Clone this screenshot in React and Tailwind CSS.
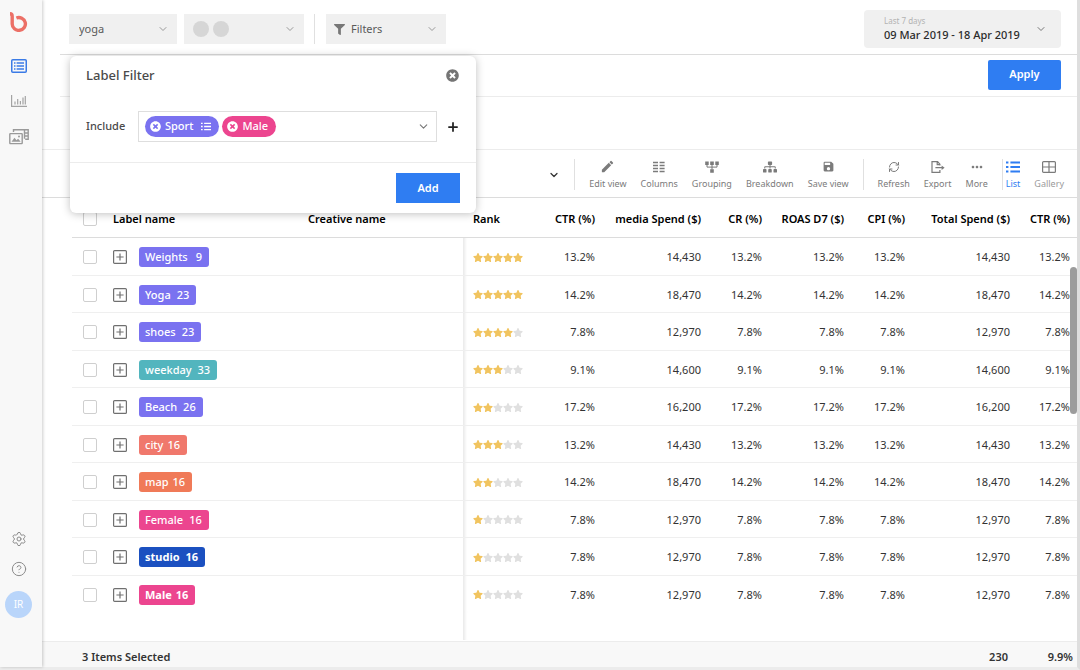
import React, { useState } from 'react';
import { ChevronDown, CircleHelp, Plus, RefreshCw, Settings } from 'lucide-react';
import { FaFilter, FaSitemap, FaStar, FaTimesCircle } from 'react-icons/fa';
import { MdEdit, MdMoreHoriz, MdSave } from 'react-icons/md';

const ROWS = [
  { label: 'Weights', count: 9, color: 'bg-[#7a72f0]', gap: 'gap-2', stars: 5, pct: '13.2%', spend: '14,430' },
  { label: 'Yoga', count: 23, color: 'bg-[#7a72f0]', gap: 'gap-1.5', stars: 5, pct: '14.2%', spend: '18,470' },
  { label: 'shoes', count: 23, color: 'bg-[#7a72f0]', gap: 'gap-1.5', stars: 4, pct: '7.8%', spend: '12,970' },
  { label: 'weekday', count: 33, color: 'bg-[#52b5be]', gap: 'gap-1.5', stars: 3, pct: '9.1%', spend: '14,600' },
  { label: 'Beach', count: 26, color: 'bg-[#7a72f0]', gap: 'gap-1.5', stars: 2, pct: '17.2%', spend: '16,200' },
  { label: 'city', count: 16, color: 'bg-[#f0786c]', gap: 'gap-1', stars: 3, pct: '13.2%', spend: '14,430' },
  { label: 'map', count: 16, color: 'bg-[#f07a58]', gap: 'gap-1', stars: 2, pct: '14.2%', spend: '18,470' },
  { label: 'Female', count: 16, color: 'bg-[#ec458f]', gap: 'gap-1.5', stars: 1, pct: '7.8%', spend: '12,970' },
  { label: 'studio', count: 16, color: 'bg-[#1b50c0]', gap: 'gap-1.5', bold: true, stars: 1, pct: '7.8%', spend: '12,970' },
  { label: 'Male', count: 16, color: 'bg-[#ec458f]', gap: 'gap-1', bold: true, stars: 1, pct: '7.8%', spend: '12,970' },
];

const Logo = () => (
  <svg className="w-[18px] h-5" viewBox="0 0 18 20" fill="none" stroke="#ec7067" strokeWidth="3.4">
    <path d="M0 1.8c1.8 0 2.2.7 2.2 2.4v7.8a6.6 6.4 0 1 0 4.2-6" />
  </svg>
);

const ReportIcon = () => (
  <svg className="w-4 h-[14px]" viewBox="0 0 16 14" fill="none" stroke="#3b7be6" strokeWidth="1.5">
    <rect x=".75" y=".75" width="14.5" height="12.5" rx="1" />
    <path d="M3 4h1.5M3 7h1.5M3 10h1.5M5.6 4H13M5.6 7H13M5.6 10H13" />
  </svg>
);

const ChartIcon = () => (
  <svg className="w-4 h-3" viewBox="0 0 16 12" fill="none" stroke="#a3a3a3" strokeWidth="1.2">
    <path d="M.6 0v11.4H16M4 9.5V6.5M6.7 9.5V4M9.4 9.5V6M12 9.5V2.5M14.3 9.5V1" />
  </svg>
);

const MediaIcon = () => (
  <svg className="w-5 h-4" viewBox="0 0 20 16" fill="none" stroke="#9a9a9a" strokeWidth="1.4">
    <path d="M4.5 3V.8h14.7v9.4h-3M15.5.8v9M15.5 4h3.7M15.5 7h3.7" />
    <rect x=".8" y="4.6" width="12.4" height="10" rx=".6" />
    <path d="M2.5 12.8l3-4 2 2.4 1.6-1.4 2.6 3z" fill="#9a9a9a" stroke="none" />
    <circle cx="10" cy="7.4" r="1" fill="#9a9a9a" stroke="none" />
  </svg>
);

const ColumnsIcon = () => (
  <svg className="w-3 h-3" viewBox="0 0 12 12" stroke="currentColor" strokeWidth="1.6">
    <path d="M0 1.5h5M0 4.5h5M0 7.5h5M0 10.5h5M6.6 1.5h5M6.6 4.5h5M6.6 7.5h5M6.6 10.5h5" />
  </svg>
);

const GroupingIcon = () => (
  <svg className="w-[14px] h-3" viewBox="0 0 14 12" fill="currentColor">
    <path d="M.2.4h3.5v3.5H.2zM5.2.4h3.6v3.5H5.2zM10.3.4h3.5v3.5h-3.5zM5.2 8.2h3.6v3.6H5.2z" />
    <path d="M2 3.5v2.6h10V3.5M7 3.5v5" fill="none" stroke="currentColor" />
  </svg>
);

const ExportIcon = () => (
  <svg className="w-[14px] h-3" viewBox="0 0 14 12" fill="none" stroke="currentColor" strokeWidth="1.2">
    <path d="M8.9 4.4V3.2L6.6.7H1v10.6h7.9V9M6.2.8v2.8h2.6M4.4 6.7h6.8" />
    <path d="M10.6 4.4l3 2.3-3 2.3z" fill="currentColor" stroke="none" />
  </svg>
);

const ListIcon = ({ className }) => (
  <svg className={className} viewBox="0 0 14 12" stroke="currentColor" strokeWidth="1.8">
    <path d="M0 1.5h2.4M0 6h2.4M0 10.5h2.4M4.4 1.5H14M4.4 6H14M4.4 10.5H14" />
  </svg>
);

const GalleryIcon = () => (
  <svg className="w-[14px] h-3" viewBox="0 0 14 12" fill="none" stroke="#7b7b7b" strokeWidth="1.2">
    <rect x=".6" y=".6" width="12.8" height="10.8" rx="1" />
    <path d="M7 .6v10.8M.6 6h12.8" />
  </svg>
);

const ExpandIcon = () => (
  <svg className="w-[14px] h-[14px]" viewBox="0 0 14 14" fill="none" stroke="#707070" strokeWidth="1.2">
    <rect x=".6" y=".6" width="12.8" height="12.8" rx="1" />
    <path d="M7 3.4v7.2M3.4 7h7.2" />
  </svg>
);

const Checkbox = ({ label }) => (
  <input
    type="checkbox"
    aria-label={label}
    className="block w-[14px] h-[14px] appearance-none rounded-xs border border-[#cfcfcf] bg-white checked:bg-[#2f7df2]"
  />
);

const ToolButton = ({ icon, label, color = 'text-[#7b7b7b]' }) => (
  <button type="button" className={`flex flex-col items-center gap-1 text-[9px] leading-3 ${color}`}>
    <span className="flex h-[14px] items-center">{icon}</span>
    {label}
  </button>
);

const Rating = ({ value }) => (
  <div className="flex" role="img" aria-label={`${value} / 5`}>
    {[1, 2, 3, 4, 5].map((star) => (
      <FaStar
        key={star}
        className={`w-[10px] h-[9px] ${star <= value ? 'text-[#f1c45f]' : 'text-[#e0e0e0]'}`}
      />
    ))}
  </div>
);

const Chip = ({ label, color, onRemove, children }) => (
  <span className={`flex h-[21px] items-center gap-1 rounded-full pl-[5px] pr-2 text-[11px] font-medium text-white ${color}`}>
    <button type="button" aria-label={`Remove ${label}`} onClick={onRemove}>
      <FaTimesCircle size={11} />
    </button>
    {label}
    {children}
  </span>
);

const Sidebar = () => (
  <aside className="relative z-10 flex w-[42px] shrink-0 flex-col items-center bg-[#f8f8f8] pb-[49px] pl-0 pr-[5px] pt-3 shadow-[1px_0_3px_rgba(0,0,0,0.2)]">
    <a href="#home" aria-label="Home"><Logo /></a>
    <nav className="mt-[27px] flex flex-col items-center gap-[22px]">
      <a href="#reports" aria-label="Reports"><ReportIcon /></a>
      <a href="#charts" aria-label="Charts"><ChartIcon /></a>
      <a href="#media" aria-label="Media"><MediaIcon /></a>
    </nav>
    <div className="mt-auto flex flex-col items-center gap-[14px] text-[#8c8c8c]">
      <button type="button" aria-label="Settings"><Settings size={16} strokeWidth={1.5} /></button>
      <button type="button" aria-label="Help"><CircleHelp size={16} strokeWidth={1.5} /></button>
      <button type="button" className="h-[27px] w-[27px] rounded-full bg-[#b9d5fa] text-[10px] text-white">
        IR
      </button>
    </div>
  </aside>
);

const LabelFilter = () => {
  const [chips, setChips] = useState(['Sport', 'Male']);
  const remove = (name) => setChips(chips.filter((c) => c !== name));

  return (
    <div
      role="dialog"
      aria-label="Label Filter"
      className="absolute left-7 top-14 z-20 w-[406px] rounded-md bg-white shadow-[0_1px_8px_rgba(0,0,0,0.25)]"
    >
      <div className="flex items-center justify-between pb-3 pl-4 pr-[17px] pt-[9px]">
        <h2 className="text-[13px] leading-5 font-medium text-[#4a4a4a]">Label Filter</h2>
        <button type="button" aria-label="Close" className="text-[#757575]">
          <FaTimesCircle size={13} />
        </button>
      </div>
      <div className="flex items-center pb-5 pl-4 pr-4 pt-[14px]">
        <label htmlFor="include" className="w-[52px] shrink-0 text-[11px] font-medium text-[#4a4a4a]">
          Include
        </label>
        <div className="flex h-[31px] min-w-0 flex-1 items-center gap-[3px] border border-[#dedede] pl-1.5 pr-1.5">
          {chips.includes('Sport') && (
            <Chip label="Sport" color="bg-[#7a72f0]" onRemove={() => remove('Sport')}>
              <ListIcon className="ml-1 w-[10px] h-[9px]" />
            </Chip>
          )}
          {chips.includes('Male') && (
            <Chip label="Male" color="bg-[#ec458f]" onRemove={() => remove('Male')} />
          )}
          <input id="include" type="text" className="min-w-0 flex-1 text-[11px] outline-none" />
          <ChevronDown size={13} className="text-[#777]" />
        </div>
        <button type="button" aria-label="Add condition" className="ml-[9px] text-[#222]">
          <Plus size={14} strokeWidth={3} />
        </button>
      </div>
      <div className="flex justify-end border-t border-[#ececec] px-4 py-2.5">
        <button type="button" className="h-[30px] w-16 bg-[#2f7df2] text-[11px] font-semibold text-white">
          Add
        </button>
      </div>
    </div>
  );
};

const TopBar = () => (
  <header className="ml-[18px] flex h-[55px] items-center border-b border-[#dcdcdc] pl-[9px] pr-4 pt-1">
    <div className="relative">
      <select
        aria-label="Campaign"
        className="h-[30px] w-[108px] appearance-none bg-[#f0f0f0] pl-2.5 text-[11px] text-[#5a5a5a]"
      >
        <option>yoga</option>
      </select>
      <ChevronDown size={12} className="pointer-events-none absolute right-2 top-[9px] text-[#999]" />
    </div>
    <button type="button" aria-label="Networks" className="ml-[7px] flex h-[30px] w-[120px] items-center gap-1 bg-[#f0f0f0] pl-[9px] pr-2">
      <span className="h-4 w-4 rounded-full bg-[#d6d6d6]" />
      <span className="h-4 w-4 rounded-full bg-[#d6d6d6]" />
      <ChevronDown size={12} className="ml-auto text-[#999]" />
    </button>
    <span className="ml-[10px] mr-[11px] h-[30px] w-px bg-[#e0e0e0]" />
    <button type="button" className="flex h-[30px] w-[120px] items-center bg-[#f0f0f0] pl-2 pr-2 text-[11px] text-[#5a5a5a]">
      <FaFilter size={11} className="mr-1.5 text-[#777]" />
      Filters
      <ChevronDown size={12} className="ml-auto text-[#999]" />
    </button>
    <button type="button" className="ml-auto flex h-[38px] w-[197px] items-center rounded-sm bg-[#f0f0f0] pl-5 pr-3.5 text-left">
      <span className="flex flex-col">
        <span className="text-[8px] leading-3 text-[#b3b3b3]">Last 7 days</span>
        <span className="text-[11px] leading-4 font-medium text-[#2b2b2b]">09 Mar 2019 - 18 Apr 2019</span>
      </span>
      <ChevronDown size={12} className="ml-auto text-[#777]" />
    </button>
  </header>
);

const Toolbar = () => (
  <div className="flex h-12 items-center justify-end gap-[14px] border-b border-[#dcdcdc] pr-[13px] pt-0.5">
    <button type="button" aria-label="Select view"><ChevronDown size={12} className="text-[#333]" strokeWidth={2.5} /></button>
    <span className="h-[31px] w-px bg-[#e0e0e0]" />
    <ToolButton icon={<MdEdit size={15} />} label="Edit view" />
    <ToolButton icon={<ColumnsIcon />} label="Columns" />
    <ToolButton icon={<GroupingIcon />} label="Grouping" />
    <ToolButton icon={<FaSitemap size={14} />} label="Breakdown" />
    <ToolButton icon={<MdSave size={13} />} label="Save view" />
    <span className="h-[31px] w-px bg-[#e0e0e0]" />
    <ToolButton icon={<RefreshCw size={12} />} label="Refresh" />
    <ToolButton icon={<ExportIcon />} label="Export" />
    <ToolButton icon={<MdMoreHoriz size={16} />} label="More" />
    <div className="flex items-center gap-[3px]">
      <span className="h-[31px] w-px bg-[#e0e0e0]" />
      <ToolButton icon={<ListIcon className="w-[14px] h-3" />} label="List" color="text-[#2f7df2]" />
    </div>
    <ToolButton icon={<GalleryIcon />} label="Gallery" color="text-[#9b9b9b]" />
  </div>
);

const edge = 'shadow-[inset_4px_0_3px_-2px_rgba(0,0,0,0.09)]';

const DataTable = () => (
  <div className="flex-1 pl-[30px]">
    <table className="w-full table-fixed text-right text-[11px] leading-4 text-[#333]">
      <colgroup>
        <col className="w-[41px]" />
        <col className="w-[26px]" />
        <col className="w-[169px]" />
        <col />
        <col className="w-[72px]" />
        <col className="w-[60px]" />
        <col className="w-[106px]" />
        <col className="w-[61px]" />
        <col className="w-[82px]" />
        <col className="w-[61px]" />
        <col className="w-[105px]" />
        <col className="w-[67px]" />
      </colgroup>
      <thead>
        <tr className="h-[39px] border-b border-[#dcdcdc] whitespace-nowrap text-black [&>th]:pt-1 [&>th]:font-semibold">
          <th className="pl-[11px]"><Checkbox label="Select all" /></th>
          <th colSpan={2} className="text-left">Label name</th>
          <th className="text-left">Creative name</th>
          <th className="pl-[10px] text-left">Rank</th>
          <th>CTR (%)</th>
          <th>media Spend ($)</th>
          <th>CR (%)</th>
          <th>ROAS D7 ($)</th>
          <th>CPI (%)</th>
          <th>Total Spend ($)</th>
          <th className="pr-[7px]">CTR (%)</th>
        </tr>
      </thead>
      <tbody>
        {ROWS.map((row) => (
          <tr key={row.label} className="h-[38px] border-b border-[#efefef] last:border-0 even:h-[37px] [&>td]:pt-0.5">
            <td className="pl-[11px]"><Checkbox label={row.label} /></td>
            <td>
              <button type="button" aria-label={`Expand ${row.label}`} className="block"><ExpandIcon /></button>
            </td>
            <td>
              <span
                className={`flex h-5 w-fit items-center rounded-[3px] pl-1.5 pr-[7px] text-white ${row.color} ${row.gap} ${
                  row.bold ? 'font-bold' : 'font-medium'
                }`}
              >
                <span>{row.label}</span>
                <span>{row.count}</span>
              </span>
            </td>
            <td />
            <td className={`pl-[10px] ${edge}`}><Rating value={row.stars} /></td>
            <td>{row.pct}</td>
            <td>{row.spend}</td>
            <td>{row.pct}</td>
            <td>{row.pct}</td>
            <td>{row.pct}</td>
            <td>{row.spend}</td>
            <td className="pr-[7px]">{row.pct}</td>
          </tr>
        ))}
      </tbody>
      <tbody>
        <tr className="h-7">
          <td colSpan={4} />
          <td colSpan={8} className={edge} />
        </tr>
      </tbody>
    </table>
  </div>
);

const App = () => (
  <div className="flex min-h-screen border-b-[3px] border-r-[3px] border-b-[#ececec] border-r-[#dedede] bg-white font-['Noto_Sans','Open_Sans',sans-serif]">
    <Sidebar />
    <main className="relative flex min-w-0 flex-1 flex-col">
      <TopBar />
      <div className="ml-[18px] flex h-[42px] items-center justify-end border-b border-[#ececec] pb-0.5 pr-4">
        <button type="button" className="h-[30px] w-[73px] rounded-xs bg-[#2f7df2] text-[11px] font-semibold text-white">
          Apply
        </button>
      </div>
      <div className="h-[53px] border-b border-[#ececec]" />
      <Toolbar />
      <DataTable />
      <footer className="flex h-[26px] items-center border-t border-[#ececec] bg-[#f8f8f8] pl-10 pr-1 pt-1.5 text-[11px] font-semibold text-[#333]">
        <span>3 Items Selected</span>
        <span className="ml-auto">230</span>
        <span className="w-[65px] text-right">9.9%</span>
      </footer>
      <LabelFilter />
      <div className="absolute right-0 top-[267px] h-[147px] w-[7px] rounded-full bg-[#9c9c9c]" />
    </main>
  </div>
);

export default App;
